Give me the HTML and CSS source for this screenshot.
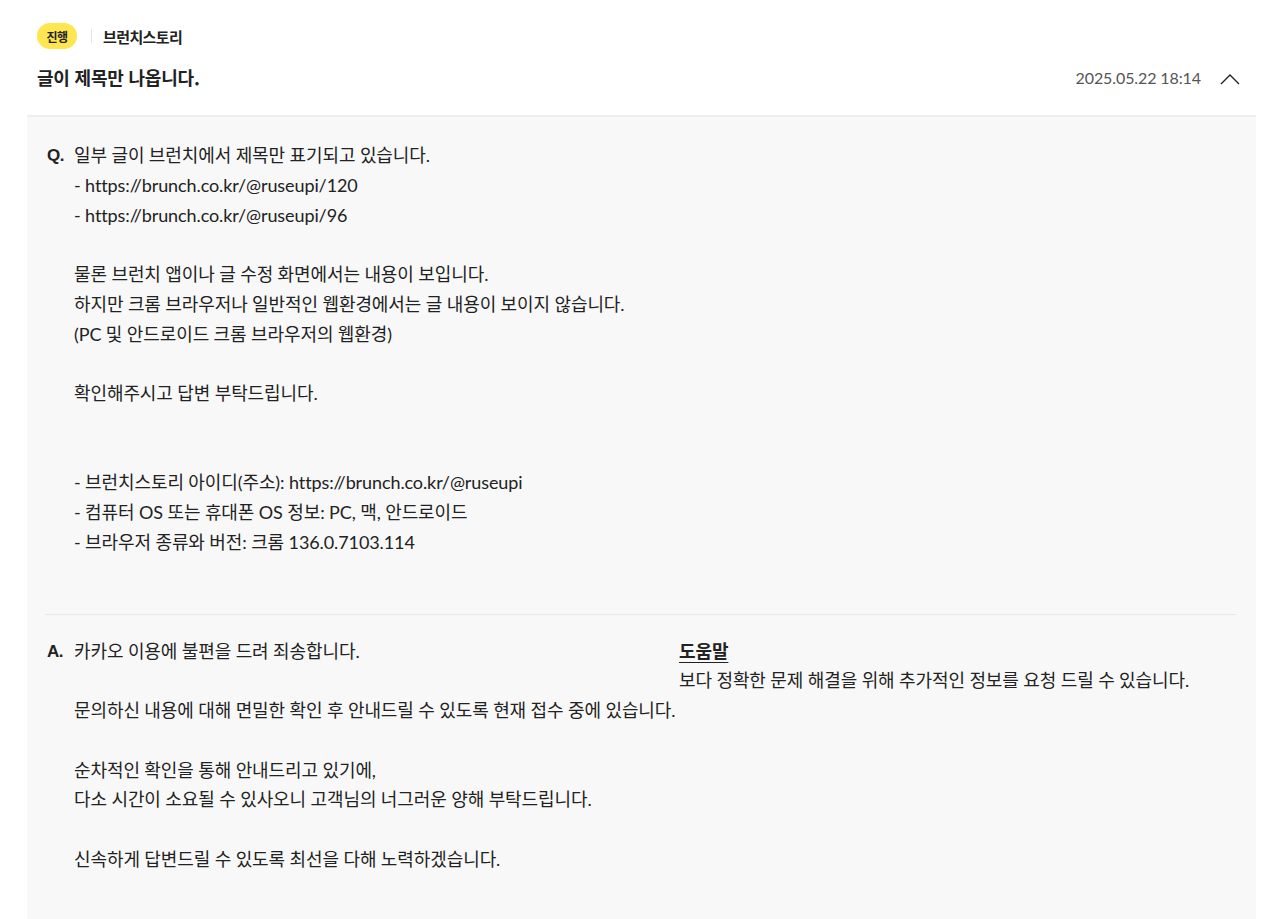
FILE: index.html
```html
<!DOCTYPE html>
<html lang="ko">
<head>
<meta charset="utf-8">
<link rel="stylesheet" href="styles.css">
</head>
<body>
<div class="item">
  <div class="head">
    <div class="meta">
      <span class="badge">진행</span>
      <span class="sep"></span>
      <span class="service">브런치스토리</span>
    </div>
    <div class="title-row">
      <h2 class="title">글이 제목만 나옵니다.</h2>
      <div class="right">
        <span class="date">2025.05.22 18:14</span>
        <svg class="chev" width="20" height="12" viewBox="0 0 20 12"><path d="M1 11 L10 2 L19 11" fill="none" stroke="#222" stroke-width="1.4"/></svg>
      </div>
    </div>
  </div>
  <div class="panel">
    <div class="qa q">
      <span class="label">Q.</span>
      <div class="text">일부 글이 브런치에서 제목만 표기되고 있습니다.<br>- https://brunch.co.kr/@ruseupi/120<br>- https://brunch.co.kr/@ruseupi/96<br><br>물론 브런치 앱이나 글 수정 화면에서는 내용이 보입니다.<br>하지만 크롬 브라우저나 일반적인 웹환경에서는 글 내용이 보이지 않습니다.<br>(PC 및 안드로이드 크롬 브라우저의 웹환경)<br><br>확인해주시고 답변 부탁드립니다.<br><br><br>- 브런치스토리 아이디(주소): https://brunch.co.kr/@ruseupi<br>- 컴퓨터 OS 또는 휴대폰 OS 정보: PC, 맥, 안드로이드<br>- 브라우저 종류와 버전: 크롬 136.0.7103.114</div>
    </div>
    <hr class="divider">
    <div class="qa a">
      <span class="label">A.</span>
      <div class="text answer">카카오 이용에 불편을 드려 죄송합니다.<br><br>문의하신 내용에 대해 면밀한 확인 후 안내드릴 수 있도록 현재 접수 중에 있습니다.<br><br>순차적인 확인을 통해 안내드리고 있기에,<br>다소 시간이 소요될 수 있사오니 고객님의 너그러운 양해 부탁드립니다.<br><br>신속하게 답변드릴 수 있도록 최선을 다해 노력하겠습니다.</div>
      <div class="help">
        <strong class="help-title">도움말</strong>
        <p class="help-text">보다 정확한 문제 해결을 위해 추가적인 정보를 요청 드릴 수 있습니다.</p>
      </div>
    </div>
  </div>
</div>
</body>
</html>
```

FILE: styles.css
```css
html, body {
  margin: 0;
  padding: 0;
  background: #fff;
}
body {
  font-family: "Noto Sans CJK KR", "Noto Sans", sans-serif;
  color: #222;
  height: 919px;
  overflow: hidden;
}
.item {
  padding: 0 24px 0 27px;
}
.head {
  padding: 23px 16px 0 10px;
  height: 115px;
  box-sizing: border-box;
}
.meta {
  display: flex;
  align-items: center;
  height: 26px;
}
.badge {
  display: inline-flex;
  align-items: center;
  justify-content: center;
  width: 40px;
  height: 26px;
  border-radius: 13px;
  background: #fee650;
  font-size: 12px;
  font-weight: 700;
  color: #222;
  letter-spacing: -0.5px;
}
.sep {
  width: 1px;
  height: 14px;
  background: #e2e2e2;
  margin: 0 11px 0 14px;
}
.service {
  font-size: 15px;
  font-weight: 700;
  letter-spacing: -0.6px;
}
.title-row {
  display: flex;
  align-items: center;
  justify-content: space-between;
  margin-top: 15px;
}
.title {
  margin: 0;
  font-size: 18px;
  font-weight: 700;
  letter-spacing: -0.2px;
  line-height: 26px;
}
.right {
  display: flex;
  align-items: center;
}
.date {
  font-family: Lato, "Noto Sans CJK KR", sans-serif;
  font-size: 16px;
  color: #555;
  letter-spacing: -0.1px;
}
.chev {
  margin-left: 19px;
  margin-top: 3px;
}
.panel {
  background: #f8f8f8;
  border-top: 2px solid #efefef;
  padding: 24px 20px 60px 18px;
  min-height: 804px;
  box-sizing: border-box;
}
.qa {
  display: flex;
  font-family: Lato, "Noto Sans CJK KR", sans-serif;
  font-size: 18px;
  line-height: 29.75px;
  letter-spacing: -0.1px;
  padding-left: 2px;
}
.label {
  width: 27px;
  flex: none;
  font-weight: 700;
  font-family: "Liberation Sans", sans-serif;
  font-size: 17px;
  letter-spacing: -0.5px;
}
.text {
  white-space: nowrap;
}
.divider {
  border: 0;
  border-top: 1px solid #e8e8e8;
  margin: 56px 0 22px;
}
.answer {
  width: 605px;
  flex: none;
}
.help-title {
  font-weight: 700;
  text-decoration: underline;
  text-underline-offset: 4px;
}
.help-text {
  margin: 0;
}
.help {
  display: flex;
  flex-direction: column;
}
```
